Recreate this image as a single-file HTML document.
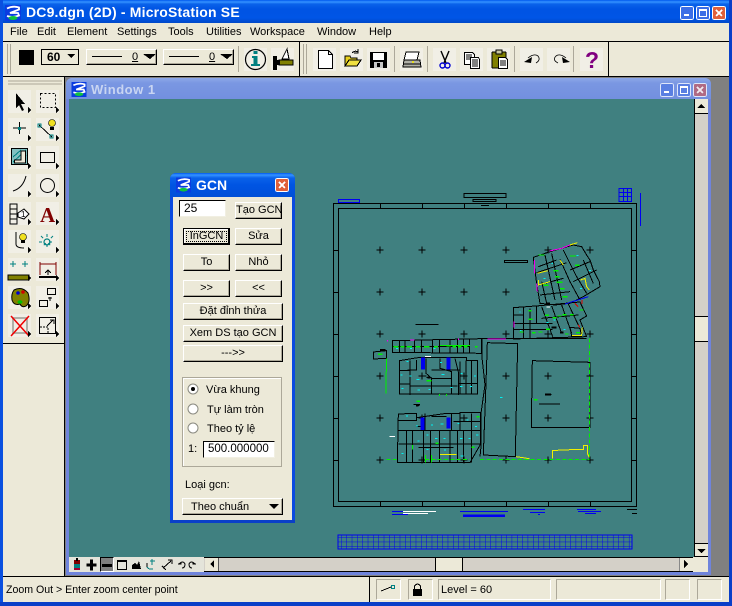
<!DOCTYPE html>
<html><head><meta charset="utf-8"><style>
html,body{margin:0;padding:0;width:732px;height:606px;overflow:hidden;background:#ece9d8}
*{box-sizing:border-box}
#r{position:relative;width:732px;height:606px;overflow:hidden;font:11px "Liberation Sans",sans-serif;color:#000}
.a,.b,.t,.s,.f{position:absolute}
.t{white-space:nowrap;line-height:14px}
.b{border:1px solid;border-color:#fff #000 #000 #fff;box-shadow:inset -1px -1px #aca899;background:#ece9d8;text-align:center;white-space:nowrap}
.s{border:1px solid;border-color:#aca899 #fff #fff #aca899}
.f{background:#f1efe6}
svg{position:absolute;left:0;top:0}
</style></head><body><div id="r">
<div class="a" style="left:0;top:0;width:732px;height:23px;background:linear-gradient(#0058ee 0,#3593ff 2px,#0a62ea 4px,#0054e3 9px,#0055e6 18px,#0048c8 23px)"></div>
<div class="a" style="left:0;top:0;width:3px;height:606px;background:#0a50e0"></div>
<div class="a" style="left:729px;top:0;width:3px;height:606px;background:#0a3fc8"></div>
<div class="a" style="left:0;top:602px;width:732px;height:4px;background:#0a3fc8"></div>
<div class="a" style="left:3px;top:41px;width:726px;height:1px;background:#000"></div>
<div class="a" style="left:3px;top:76px;width:726px;height:1px;background:#000"></div>
<div class="a" style="left:299px;top:42px;width:1px;height:34px;background:#000"></div>
<div class="a" style="left:608px;top:42px;width:1px;height:34px;background:#000"></div>
<div class="a" style="left:65px;top:77px;width:664px;height:499px;background:#808080"></div>
<div class="a" style="left:64px;top:77px;width:1px;height:499px;background:#000"></div>
<div class="a" style="left:3px;top:343px;width:61px;height:1px;background:#000"></div>
<div class="a" style="left:3px;top:576px;width:726px;height:1px;background:#000"></div>
<div class="a" style="left:66px;top:78px;width:645px;height:497px;background:#6f84dc;border-radius:6px 6px 0 0"></div>
<div class="a" style="left:66px;top:78px;width:645px;height:21px;background:linear-gradient(#8da8e8,#7a97e2 5px,#7390df 20px);border-radius:6px 6px 0 0"></div>
<div class="a" style="left:69px;top:99px;width:625px;height:458px;background:#408080"></div>
<div class="t" style="left:10px;top:25px">File</div><div class="t" style="left:37px;top:25px">Edit</div><div class="t" style="left:67px;top:25px">Element</div><div class="t" style="left:117px;top:25px">Settings</div><div class="t" style="left:168px;top:25px">Tools</div><div class="t" style="left:206px;top:25px">Utilities</div><div class="t" style="left:250px;top:25px">Workspace</div><div class="t" style="left:317px;top:25px">Window</div><div class="t" style="left:369px;top:25px">Help</div>
<div class="t" style="left:26px;top:5px;color:#fff;font-size:14px;font-weight:bold;letter-spacing:.18px">DC9.dgn (2D) - MicroStation SE</div>
<div class="t" style="left:91px;top:83px;color:#c9d5f2;font-size:13px;font-weight:bold;letter-spacing:.5px">Window 1</div>
<!-- toolbar faces -->
<div class="f" style="left:244px;top:48px;width:23px;height:23px"></div><div class="f" style="left:271px;top:48px;width:23px;height:23px"></div><div class="f" style="left:313px;top:48px;width:23px;height:23px"></div><div class="f" style="left:340px;top:48px;width:23px;height:23px"></div><div class="f" style="left:367px;top:48px;width:23px;height:23px"></div><div class="f" style="left:400px;top:48px;width:23px;height:23px"></div><div class="f" style="left:433px;top:48px;width:23px;height:23px"></div><div class="f" style="left:460px;top:48px;width:23px;height:23px"></div><div class="f" style="left:487px;top:48px;width:23px;height:23px"></div><div class="f" style="left:520px;top:48px;width:23px;height:23px"></div><div class="f" style="left:547px;top:48px;width:23px;height:23px"></div><div class="f" style="left:580px;top:48px;width:23px;height:23px"></div>
<!-- combo boxes -->
<div class="a" style="left:41px;top:49px;width:38px;height:16px;border:1px solid #000;background:#ece9d8;font-weight:bold;font-size:12px;line-height:14px;padding-left:5px">60</div>
<div class="b" style="left:86px;top:49px;width:71px;height:16px"></div><div class="b" style="left:163px;top:49px;width:71px;height:16px"></div>
<div class="t" style="left:132px;top:50px;text-decoration:underline">0</div><div class="t" style="left:209px;top:50px;text-decoration:underline">0</div>
<!-- toolbox faces -->
<div class="f" style="left:8px;top:90px;width:23px;height:23px"></div><div class="f" style="left:36px;top:90px;width:23px;height:23px"></div><div class="f" style="left:8px;top:118px;width:23px;height:23px"></div><div class="f" style="left:36px;top:118px;width:23px;height:23px"></div><div class="f" style="left:8px;top:146px;width:23px;height:23px"></div><div class="f" style="left:36px;top:146px;width:23px;height:23px"></div><div class="f" style="left:8px;top:174px;width:23px;height:23px"></div><div class="f" style="left:36px;top:174px;width:23px;height:23px"></div><div class="f" style="left:8px;top:202px;width:23px;height:23px"></div><div class="f" style="left:36px;top:202px;width:23px;height:23px"></div><div class="f" style="left:8px;top:230px;width:23px;height:23px"></div><div class="f" style="left:36px;top:230px;width:23px;height:23px"></div><div class="f" style="left:8px;top:258px;width:23px;height:23px"></div><div class="f" style="left:36px;top:258px;width:23px;height:23px"></div><div class="f" style="left:8px;top:286px;width:23px;height:23px"></div><div class="f" style="left:36px;top:286px;width:23px;height:23px"></div><div class="f" style="left:8px;top:314px;width:23px;height:23px"></div><div class="f" style="left:36px;top:314px;width:23px;height:23px"></div>
<!-- scrollbars -->
<div class="a" style="left:694px;top:99px;width:14px;height:458px;background:#d4d0c8;border-left:1px solid #000"></div>
<div class="a" style="left:694px;top:99px;width:14px;height:15px;background:#ece9d8;border-bottom:1px solid #000;border-left:1px solid #000"></div>
<div class="a" style="left:694px;top:316px;width:14px;height:26px;background:#ece9d8;border-top:1px solid #000;border-bottom:1px solid #000;border-left:1px solid #000"></div>
<div class="a" style="left:694px;top:543px;width:14px;height:14px;background:#ece9d8;border-top:1px solid #000;border-left:1px solid #000;border-bottom:1px solid #000"></div>
<div class="a" style="left:69px;top:557px;width:135px;height:15px;background:#e4e4da"></div>
<div class="a" style="left:204px;top:557px;width:490px;height:15px;background:#d4d0c8;border-top:1px solid #000;border-bottom:1px solid #000"></div>
<div class="a" style="left:205px;top:558px;width:14px;height:13px;background:#ece9d8;border-right:1px solid #555"></div>
<div class="a" style="left:435px;top:557px;width:28px;height:15px;background:#ece9d8;border:1px solid #000;border-top:1px solid #000"></div>
<div class="a" style="left:679px;top:558px;width:14px;height:13px;background:#ece9d8;border-left:1px solid #888"></div>
<div class="a" style="left:693px;top:557px;width:15px;height:15px;background:#ece9d8"></div>
<div class="a" style="left:100px;top:557px;width:14px;height:15px;background:#808080;border-left:1px solid #000;border-top:1px solid #000;border-right:1px solid #fff;border-bottom:1px solid #fff"></div>
<!-- status -->
<div class="t" style="left:6px;top:583px;font-size:10.6px">Zoom Out &gt; Enter zoom center point</div>
<div class="a" style="left:369px;top:577px;width:1px;height:25px;background:#000"></div>
<div class="s" style="left:376px;top:579px;width:25px;height:21px"></div><div class="s" style="left:408px;top:579px;width:25px;height:21px"></div><div class="s" style="left:438px;top:579px;width:113px;height:21px"></div><div class="s" style="left:556px;top:579px;width:105px;height:21px"></div><div class="s" style="left:665px;top:579px;width:25px;height:21px"></div><div class="s" style="left:697px;top:579px;width:25px;height:21px"></div>
<div class="t" style="left:441px;top:583px;font-size:11px">Level = 60</div>

<svg width="732" height="606" viewBox="0 0 732 606" shape-rendering="crispEdges">
<defs>
<symbol id="lg" viewBox="0 0 16 16"><rect width="16" height="16" fill="#0a3ce0"/><path d="M2 3.500Q8 .5 14 2.500V4.500L5 8 13 8 14 10.500Q8 13 2 11" fill="none" stroke="#fff" stroke-width="1.800" shape-rendering="auto"/><ellipse cx="8" cy="13" rx="4.500" ry="2" fill="#10c040" shape-rendering="auto"/></symbol>
<pattern id="gr" width="5.33" height="4.67" patternUnits="userSpaceOnUse"><path d="M0 0H5.33M0 0V4.67" stroke="#0000f0" stroke-width="1" fill="none"/></pattern>
</defs>
<use href="#lg" x="5" y="5" width="16" height="16"/>
<use href="#lg" x="71" y="82" width="16" height="15"/>
<!-- main buttons -->
<rect x="680.5" y="6.5" width="13" height="13" rx="2" fill="#3c6ee6" stroke="#fff"/><rect x="684" y="14" width="5" height="2" fill="#fff"/>
<rect x="696.5" y="6.5" width="13" height="13" rx="2" fill="#3c6ee6" stroke="#fff"/><rect x="699.5" y="9.5" width="7" height="7" fill="none" stroke="#fff"/><rect x="699" y="9" width="8" height="2" fill="#fff"/>
<rect x="712.5" y="6.5" width="13" height="13" rx="2" fill="#e0603a" stroke="#fff"/><path d="M716 10L722 16M722 10L716 16" stroke="#fff" stroke-width="2"/>
<!-- window 1 buttons -->
<rect x="660.5" y="83.5" width="13" height="13" rx="2" fill="#5a7fe2" stroke="#dfe6fa"/><rect x="664" y="91" width="5" height="2" fill="#fff"/>
<rect x="677.5" y="83.5" width="13" height="13" rx="2" fill="#5a7fe2" stroke="#dfe6fa"/><rect x="680.5" y="86.5" width="7" height="7" fill="none" stroke="#fff"/><rect x="680" y="86" width="8" height="2" fill="#fff"/>
<rect x="693.5" y="83.5" width="13" height="13" rx="2" fill="#b06a84" stroke="#dfe6fa"/><path d="M697 87L703 93M703 87L697 93" stroke="#f0e8ee" stroke-width="2"/>
<!-- gripper and separators -->
<path d="M7.5 44V74M10.5 44V74M238.5 46V72M303.5 44V74M306.5 44V74M394.5 46V72M427.5 46V72M514.5 46V72M573.5 46V72" stroke="#aca899"/>
<path d="M8 81H62M8 84H62" stroke="#aca899"/>
<!-- colour swatch -->
<rect x="19" y="50" width="15" height="15" fill="#000"/>
<path d="M67 54h8l-4 4z" fill="#000"/><path d="M143 54h13l-6 5z" fill="#000"/><path d="M220 54h13l-6 5z" fill="#000"/>
<path d="M92 56.5H122M169 56.5H199" stroke="#000"/>
<!-- info -->
<g shape-rendering="auto"><circle cx="255.5" cy="59.5" r="10" fill="none" stroke="#000" stroke-width="1.2"/><rect x="253.500" y="56" width="4" height="9" fill="#008080"/><rect x="251" y="64" width="9" height="2" fill="#008080"/><rect x="252" y="56" width="4" height="2" fill="#008080"/><rect x="253.500" y="51" width="4" height="3" fill="#008080"/></g>
<!-- measure -->
<rect x="279" y="60" width="14" height="5" fill="#808000" stroke="#000" stroke-width=".6"/><rect x="273" y="56" width="4" height="14" fill="#000"/><rect x="276" y="60" width="4" height="5" fill="#000"/><path d="M287 49L282 59H289Z" fill="#fff" stroke="#000"/>
<!-- new -->
<path d="M318.500 50.500H328.500L332.500 54.500V68.500H318.500Z" fill="#fff" stroke="#000"/><path d="M328.500 50.500V54.500H332.500" fill="none" stroke="#000"/>
<!-- open -->
<path d="M345 56H350L351 58H357V66H345Z" fill="#e8d020" stroke="#000"/><path d="M345 66L349 60H361L357 66Z" fill="#f0e040" stroke="#000"/><path d="M352 53Q355 50 358 52M358 49V53H354" fill="none" stroke="#000"/>
<!-- save -->
<rect x="370" y="52" width="17" height="16" fill="#000"/><rect x="373" y="53" width="11" height="7" fill="#fff"/><rect x="374" y="62" width="9" height="6" fill="#c8c8c8"/><rect x="377" y="63" width="3" height="4" fill="#000"/>
<!-- print -->
<path d="M406 52H419L417 60H404Z" fill="#fff" stroke="#000"/><path d="M404 60H420L421 67H403Z" fill="#b0b0a8" stroke="#000"/><path d="M404 64H420" stroke="#000"/><rect x="412" y="61" width="2" height="2" fill="#e8e020"/>
<!-- cut -->
<g shape-rendering="auto"><path d="M441 51L446 63M449 51L444 63" stroke="#000" stroke-width="1.4"/><circle cx="442.500" cy="65.500" r="2.500" fill="none" stroke="#0000d0" stroke-width="1.400"/><circle cx="447.500" cy="65.500" r="2.500" fill="none" stroke="#0000d0" stroke-width="1.400"/></g>
<!-- copy -->
<path d="M464.500 52.500H472.500L474.500 54.500V64.500H464.500Z" fill="#fff" stroke="#000"/><path d="M466 55H472M466 57H472M466 59H472" stroke="#000"/><path d="M470.500 57.500H478.500L479.500 59.500V68.500H470.500Z" fill="#fff" stroke="#000"/><path d="M472 60H478M472 62H478M472 64H478M472 66H478" stroke="#000"/>
<!-- paste -->
<rect x="492" y="52" width="14" height="16" rx="1" fill="#808000" stroke="#000"/><rect x="496" y="50" width="6" height="4" fill="#c8c8a0" stroke="#000"/><path d="M498.500 57.500H505.500L507.500 59.500V68.500H498.500Z" fill="#fff" stroke="#000"/><path d="M500 61H506M500 63H506M500 65H506" stroke="#000"/>
<!-- undo redo -->
<g shape-rendering="auto"><path d="M528 58Q534 53 538 56Q541 60 536 63" fill="none" stroke="#000" stroke-width=".8"/><path d="M524 62L532 57L531 63Z" fill="#000"/><path d="M566 58Q560 53 556 56Q552 60 558 63" fill="none" stroke="#000" stroke-width=".8"/><path d="M570 62L562 57L563 63Z" fill="#000"/>
<text x="585" y="68" font-family="Liberation Sans" font-weight="bold" font-size="23" fill="#800080">?</text></g>
<!-- toolbox icons -->
<path d="M16 93V108L19 105L22 111L24 110L21 104H25Z" fill="#000"/>
<rect x="40.500" y="93.500" width="15" height="14" fill="none" stroke="#000" stroke-dasharray="2 2"/>
<path d="M19.500 122V134M13 128H26" stroke="#000"/><rect x="18" y="127" width="3" height="3" fill="#008080"/>
<path d="M39 125L52 137" stroke="#000"/><rect x="38" y="124" width="3" height="3" fill="none" stroke="#008080"/><rect x="50" y="135" width="3" height="3" fill="none" stroke="#008080"/><g shape-rendering="auto"><circle cx="52" cy="123" r="3.500" fill="#f0e020" stroke="#000" stroke-width=".6"/></g><rect x="50" y="127" width="4" height="3" fill="#000"/>
<rect x="11.500" y="148.500" width="16" height="16" fill="#80c0c0" stroke="#000"/><path d="M13 162L26 150M13 157L21 150M18 163L26 155" stroke="#008080"/><path d="M14.500 161.500V160H21V151H25.500V163H14.500Z" fill="#ece9d8" stroke="#000"/>
<rect x="40.500" y="152.500" width="14" height="10" fill="none" stroke="#000"/>
<g shape-rendering="auto"><path d="M13 191Q23 188 26 176" fill="none" stroke="#000" stroke-width="1"/><circle cx="47.500" cy="185.500" r="7" fill="none" stroke="#000" stroke-width="1"/>
<path d="M10 204H17V224H10Z" fill="none" stroke="#000"/><path d="M10 209H17M10 214H17M10 219H17" stroke="#000"/><path d="M18 213L24 209L29 214L24 219L18 217Z" fill="#fff" stroke="#000"/><text x="21" y="217" font-family="Liberation Sans" font-size="8">1</text>
<text x="40" y="222" font-family="Liberation Serif" font-weight="bold" font-size="21" fill="#800000">A</text>
<path d="M16 232V244Q16 248 24 248" fill="none" stroke="#000"/><circle cx="23" cy="237" r="3.500" fill="#f0e020" stroke="#000" stroke-width=".6"/><circle cx="47" cy="242" r="3" fill="none" stroke="#008080" stroke-width="1.200"/><path d="M47 234V250M39 242H55M41 236L53 248M53 236L41 248" stroke="#008080" stroke-dasharray="3 7"/></g>
<rect x="21" y="240" width="4" height="3" fill="#000"/>
<path d="M13 261V267M10 264H16M25 261V267M22 264H28" stroke="#008080"/><rect x="8" y="275" width="21" height="5" fill="#808000" stroke="#000"/>
<path d="M40 262V275M56 262V275M40 264H56" stroke="#800000"/><path d="M48 270V275M45 273L48 270L51 273" stroke="#000" fill="none"/><rect x="39" y="276" width="18" height="2" fill="#000"/>
<g shape-rendering="auto"><path d="M14 290Q22 286 28 293Q31 302 26 306Q22 308 20 304Q14 306 12 300Q11 294 14 290Z" fill="#808000" stroke="#000"/><circle cx="23" cy="292" r="1.800" fill="#d00000"/><circle cx="18" cy="293" r="1.800" fill="#0000d0"/><ellipse cx="20" cy="302" rx="2.500" ry="1.800" fill="#00c000"/></g>
<rect x="47.500" y="288.500" width="8" height="6" fill="none" stroke="#000"/><rect x="39.500" y="300.500" width="8" height="6" fill="none" stroke="#000"/><path d="M50 297V301M48 298H52" stroke="#000"/>
<rect x="13" y="318" width="14" height="15" fill="none" stroke="#b0b0a8" stroke-width="2"/><g shape-rendering="auto"><path d="M11 316L29 336M29 316L11 336" stroke="#f00000" stroke-width="1.500"/></g>
<rect x="39.500" y="317.500" width="16" height="16" fill="none" stroke="#000"/><path d="M40 327H48V333" stroke="#000" stroke-dasharray="2 1" fill="none"/><path d="M47 326L53 320M50 320H54V324" stroke="#000" fill="none"/>
<!-- tool flyout triangles -->
<path d="M28 107l3 3-3 3zM56 107l3 3-3 3zM28 135l3 3-3 3zM56 135l3 3-3 3zM28 163l3 3-3 3zM56 163l3 3-3 3zM28 191l3 3-3 3zM56 191l3 3-3 3zM28 219l3 3-3 3zM56 219l3 3-3 3zM28 247l3 3-3 3zM56 247l3 3-3 3zM28 275l3 3-3 3zM56 275l3 3-3 3zM28 303l3 3-3 3zM56 303l3 3-3 3zM28 331l3 3-3 3zM56 331l3 3-3 3z" fill="#000"/>
<!-- scroll arrows -->
<path d="M701 104l-4 4h8zM697 549h9l-4.500 4zM214 560v8l-4-4zM684 560v8l4-4z" fill="#000"/>
<!-- view controls -->
<rect x="74" y="563" width="6" height="5" fill="#008080"/><rect x="74" y="560" width="6" height="4" fill="#800000"/><rect x="76" y="558" width="2" height="3" fill="#000"/><rect x="74" y="568" width="6" height="2" fill="#a00030"/>
<path d="M87 564H96V566H87ZM90.500 560H92.500V570H90.500Z" fill="#000" stroke="#000"/>
<rect x="102" y="564" width="10" height="3" fill="#000"/>
<rect x="117.500" y="560.500" width="9" height="9" fill="none" stroke="#000"/><rect x="117" y="560" width="10" height="2" fill="#000"/>
<path d="M132 569V565L135 563L137 565L139 561L141 569Z" fill="#000"/>
<path d="M147 567Q149 570 153 569M150 561h5M152 559v6" stroke="#008080" fill="none"/><path d="M147 567V563" stroke="#000"/>
<path d="M163 568L171 561M168 560H172V564M162 566L166 570" stroke="#000" fill="none"/>
<path d="M179 564Q183 560 185 564Q185 568 182 568M178 564h3v-2M195 564Q191 560 189 564Q189 568 192 568M196 564h-3v-2" fill="none" stroke="#000" shape-rendering="auto"/>
<!-- status icons -->
<path d="M381 591L391 587" stroke="#000"/><rect x="391.500" y="585.500" width="3" height="3" fill="none" stroke="#008080"/>
<rect x="413" y="589" width="9" height="7" fill="#000"/><path d="M414.500 589V586Q417.500 582 420.500 586V589" fill="none" stroke="#000"/>

<!-- CAD drawing frame -->
<g fill="none" stroke="#000">
<path d="M333.500 203.500H636.500V506.500H333.500Z"/>
<path d="M338.500 208.500H631.500V501.500H338.500Z"/>
<path d="M380.500 204V208M422.500 204V208M464.500 204V208M506.500 204V208M548.500 204V208M590.500 204V208M380.500 502V506M422.500 502V506M464.500 502V506M506.500 502V506M548.500 502V506M590.500 502V506M333 250.500H338M333 292.500H338M333 334.500H338M333 376.500H338M333 418.500H338M333 460.500H338M632 250.500H637M632 292.500H637M632 334.500H637M632 376.500H637M632 418.500H637M632 460.500H637"/>
<path d="M464 193.500H506M464 197.500H506M464 193V198M506 193V198M473 199.500H496M473 201.500H496M473 199V202M496 199V202"/>
<path d="M481 205.500H489" />
<path d="M619 188.500H631.500V201.500H619ZM623.500 188V202M627.500 188V202M619 192.500H632M619 196.500H632" stroke="#0000f0"/>
<path d="M640.500 193V226" stroke="#0000f0"/>
<path d="M338.500 199.500H359.500V202.500H338.500Z" stroke="#0000f0"/>
<path d="M392 511.500H410M392 514.500H408M460 511.500H508M463 516.500H505M523 509.500H545M530 512.500H545M538 514.500H540M577 509.500H596M578 511.500H601M585 513.500H596" stroke="#0000f0"/>
<path d="M463 515.500H505" stroke="#0000f0" stroke-width="2"/>
<path d="M403 511.500H436M403 513.500H428" stroke="#fff"/>
<path d="M627 509.500H637M632 513.500H637" />
</g>
<rect x="338" y="535" width="294" height="14" fill="url(#gr)" stroke="#0000f0"/>

<!-- CAD plan -->
<g transform="translate(370 240) scale(.3333)" fill="none" stroke="#000" stroke-width="3">
<path stroke-width="3" d="M20 30H40M30 20V40M146 30H166M156 20V40M272 30H292M282 20V40M398 30H418M408 20V40M524 30H544M534 20V40M650 30H670M660 20V40M20 156H40M30 146V166M146 156H166M156 146V166M272 156H292M282 146V166M398 156H418M408 146V166M20 282H40M30 272V292M146 282H166M156 272V292M272 282H292M282 272V292M398 282H418M408 272V292M524 282H544M534 272V292M650 282H670M660 272V292M20 408H40M30 398V418M146 408H166M156 398V418M272 408H292M282 398V418M398 408H418M408 398V418M524 408H544M534 398V418M650 408H670M660 398V418M20 534H40M30 524V544M146 534H166M156 524V544M272 534H292M282 524V544M398 534H418M408 524V544M524 534H544M534 524V544M650 534H670M660 524V544M20 660H40M30 650V670M146 660H166M156 650V670M272 660H292M282 650V670M398 660H418M408 650V670M524 660H544M534 650V670M650 660H670M660 650V670"/>
<path d="M403 61H472V67H403ZM136 253H206"/>
<!-- rotated block -->
<path d="M490 52L540 35L610 15L635 20L650 45L660 60L670 90L688 125L690 140L640 170L600 190L555 195L510 190L500 130Z"/>
<path d="M500 98L590 68M525 45L555 180M570 58L600 125L630 180M545 40L575 180M600 90L660 65M610 125L680 90M505 135L580 115M510 165L600 155M515 125L530 190M580 30L620 110L650 160M505 80L560 60M640 60L670 130"/>
<!-- mid block -->
<path d="M430 203L510 197L630 186L650 228L630 240L650 290L430 297Z"/>
<path d="M460 203V295M480 205V294M430 225H460M430 250H548M430 268H548M515 200L548 290M545 198L575 280M575 195L605 280M595 192L625 255M515 235L625 225M500 200V250M600 262L630 265L635 288H605Z"/>
<!-- strip -->
<path d="M67 302L335 296V340L67 337Z"/>
<path d="M88 302V337M105 302V337M133 301V338M155 301V338M187 300V338M208 300V338M240 299V339M262 299V339M280 298V339M298 298V339M67 320H298"/>
<path d="M10 336L50 332V355L10 357Z"/>
<!-- upper building -->
<path d="M88 362L150 352H290V362H322V462H88Z"/>
<path d="M120 362V465M88 392H120M88 432H120M118 438H262M112 390H140V360M168 355V400L185 415V462M210 355V385L245 395V462M255 355L265 395V465M270 365V462M288 362V462M305 362V462M265 430H322M185 390H270M185 415H245"/>
<!-- lower building -->
<path d="M85 522L140 520V533L230 520H270V517H332V612L300 668H200L82 668Z"/>
<path d="M85 542H140V530M85 572H332M85 612H332M110 572V668M128 572V668M160 572V668M182 572V668M208 572V668M240 572V668M262 572V668M280 572V668M305 520V668M145 622H250M165 520V572M245 520V572M185 530H230M270 520V572M250 545H330M140 560H165"/>
<!-- long lot -->
<path d="M336 296V352L345 435L333 520V620L330 650M352 308L443 311L436 650L340 645L348 430Z"/>
<path d="M336 296H650"/>
<!-- right lot -->
<path d="M487 362L660 367V562H484L487 362ZM507 492H570M525 463H545"/>
<path d="M140 497H148M130 494H150M170 412H184M150 408H170"/>
</g>
<g transform="translate(370 240) scale(.3333)" fill="none" stroke-width="3">
<path stroke="#0000f0" stroke-width="12" d="M159 352V388M236 352V388M158 533V570M236 533V566"/>
<path stroke="#0000f0" d="M585 192L655 170"/>
<path stroke="#e00000" d="M615 190L625 200M636 180V192M625 255L630 262"/>
<path stroke="#f000f0" d="M538 33L575 25M575 25L600 15M493 60V100M500 130L502 155M432 245V262M120 300H133M352 297H408M52 300V304M265 296V300"/>
<path stroke="#f0f000" d="M600 15L622 8M570 60L580 75M502 100L533 92M505 120V135L540 125M632 120L645 115L650 140L658 150M606 286H635L637 262M438 650L478 656M210 643H260M548 656V632L575 630L640 628V616H652V640L658 652"/>
<path stroke="#00f000" stroke-dasharray="12 7" d="M50 658H80M165 658H300M330 658H658M658 295V652"/>
<path stroke="#00f000" d="M50 355V395M48 395V460M210 316H300M185 645V668M166 645V668M128 615V628M208 462V468M230 462V468"/>
<path stroke="#00f000" stroke-width="4" d="M505 45h18M600 48h18M615 76h14M550 92h16M555 110h14M560 127h18M570 146h14M578 170h14M520 136h16M475 212h10M476 238h12M525 226h12M548 233h12M562 228h12M578 224h12M600 224h10M628 210h12M448 276h12M486 278h10M505 276h12M528 268h12M618 278h12M585 282h10M70 320h16M92 320h12M110 320h16M137 320h14M162 320h16M192 320h12M230 318h12M248 320h10M264 320h10M282 320h10M315 320h8M24 343h14M170 422h14M140 484h10M492 479h10M196 610h10M320 530h8M305 622h8"/>
<path stroke="#00f0f0" d="M620 46h6M520 115h6M545 70h4M657 92h6M630 145h6M448 216h4M530 248h6M550 240h6M580 268h6M450 272h4M78 325h6M120 325h6M190 325h6M110 365h6M210 368h6M92 405h6M118 408h6M95 445h6M140 418h8M142 450h8M175 448h6M215 403h8M242 442h6M270 440h8M300 440h6M272 400h6M312 408h6M390 472h8M108 528h6M138 558h6M183 555h6M212 552h8M262 550h6M290 540h6M315 560h6M318 585h8M195 595h8M220 595h6M270 595h8M295 595h6M142 603h6M170 628h6M222 630h6M272 648h8M95 640h6M170 585h6"/>
<path stroke="#fff" d="M165 349H183M58 589H75M530 201h10"/>
<path stroke="#000" stroke-width="6" d="M525 463H543M138 497H146M172 412H182M30 330H46M530 190h10M545 262h14M570 278h10"/>
</g>
</svg>

<!-- GCN dialog -->
<div class="a" style="left:170px;top:173px;width:125px;height:350px;background:#0a4ae0;border-radius:6px 6px 0 0;border-bottom:3px solid #0a3fc8"></div>
<div class="a" style="left:170px;top:173px;width:125px;height:24px;background:linear-gradient(#0058ee,#3593ff 2px,#0a62ea 5px,#0054e3 12px,#0050d8 24px);border-radius:6px 6px 0 0"></div>
<div class="a" style="left:173px;top:197px;width:119px;height:323px;background:#ece9d8"></div>
<svg width="732" height="606" viewBox="0 0 732 606" shape-rendering="crispEdges">
<use href="#lg" x="176" y="177" width="15" height="16"/>
<rect x="275.500" y="178.500" width="13" height="13" rx="2" fill="#e0603a" stroke="#fff"/><path d="M279 182L285 188M285 182L279 188" stroke="#fff" stroke-width="2"/>
</svg>
<div class="t" style="left:196px;top:178px;color:#fff;font-size:14px;font-weight:bold">GCN</div>
<div class="a" style="left:179px;top:200px;width:47px;height:17px;background:#fff;border:1px solid;border-color:#000 #f1efe2 #f1efe2 #000;line-height:14px;padding-left:4px;font-size:12px">25</div>
<div class="b" style="left:235px;top:202px;width:47px;height:17px;line-height:15px">Tạo GCN</div>
<div class="b" style="left:183px;top:228px;width:47px;height:17px;line-height:15px;border-color:#000;box-shadow:inset -1px -1px #000,inset 1px 1px #fff;outline:1px dotted #000;outline-offset:-4px">InGCN</div>
<div class="b" style="left:235px;top:228px;width:47px;height:17px;line-height:15px">Sửa</div>
<div class="b" style="left:183px;top:254px;width:47px;height:17px;line-height:15px">To</div>
<div class="b" style="left:235px;top:254px;width:47px;height:17px;line-height:15px">Nhỏ</div>
<div class="b" style="left:183px;top:280px;width:47px;height:17px;line-height:15px">&gt;&gt;</div>
<div class="b" style="left:235px;top:280px;width:47px;height:17px;line-height:15px">&lt;&lt;</div>
<div class="b" style="left:183px;top:303px;width:100px;height:17px;line-height:15px">Đặt đỉnh thửa</div>
<div class="b" style="left:183px;top:325px;width:100px;height:17px;line-height:15px">Xem DS tạo GCN</div>
<div class="b" style="left:183px;top:345px;width:100px;height:17px;line-height:15px">---&gt;&gt;</div>
<div class="a" style="left:182px;top:377px;width:100px;height:90px;border:1px solid #aca899;box-shadow:inset 1px 1px #fff"></div>
<svg width="732" height="606" viewBox="0 0 732 606">
<circle cx="193" cy="389" r="5" fill="#fff" stroke="#8a8a80"/><circle cx="193" cy="389" r="2" fill="#000"/>
<circle cx="193" cy="409" r="5" fill="#fff" stroke="#8a8a80"/>
<circle cx="193" cy="428" r="5" fill="#fff" stroke="#8a8a80"/>
</svg>
<div class="t" style="left:206px;top:383px">Vừa khung</div>
<div class="t" style="left:207px;top:403px">Tự làm tròn</div>
<div class="t" style="left:207px;top:422px">Theo tỷ lệ</div>
<div class="t" style="left:188px;top:442px">1:</div>
<div class="a" style="left:203px;top:441px;width:72px;height:17px;background:#fff;border:1px solid;border-color:#000 #f1efe2 #f1efe2 #000;line-height:15px;padding-left:4px;font-size:11.500px">500.000000</div>
<div class="t" style="left:185px;top:478px">Loại gcn:</div>
<div class="b" style="left:182px;top:498px;width:101px;height:17px;line-height:16px;text-align:left;padding-left:8px">Theo chuẩn</div>
<svg width="732" height="606" viewBox="0 0 732 606"><path d="M269 504h10l-5 5z" fill="#000"/></svg>
</div></body></html>
